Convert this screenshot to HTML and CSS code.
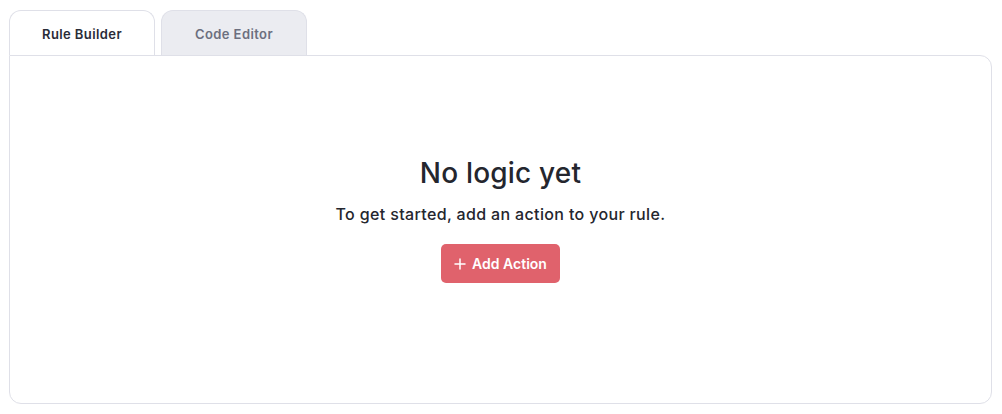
FILE: index.html
```html
<!DOCTYPE html>
<html lang="en">
<head>
    <meta charset="UTF-8">
    <meta name="viewport" content="width=device-width, initial-scale=1.0">
    <title>Rule Editor</title>
    <link rel="stylesheet" href="styles.css">
</head>
<body>

    <div class="editor">
        <div class="tabs">
            <button class="tab active">Rule Builder</button>
            <button class="tab">Code Editor</button>
        </div>

        <div class="panel">
            <div class="empty">
                <h2>No logic yet</h2>
                <p>To get started, add an action to your rule.</p>
                <button class="add-action">
                    <svg width="12" height="12" viewBox="0 0 12 12"><path d="M6 1v10M1 6h10" stroke="white" stroke-width="1.5" stroke-linecap="round"/></svg>
                    Add Action
                </button>
            </div>
        </div>
    </div>

</body>
</html>
```

FILE: styles.css
```css
* { margin: 0; padding: 0; box-sizing: border-box; }
body {
    font-family: "Inter", "Noto Sans", sans-serif;
    background: white;
    color: #24262e;
    padding: 10px 10px 10px 9px;
}
.editor {
    display: flex;
    flex-direction: column;
    height: 394px;
}
.tabs {
    display: flex;
    gap: 6px;
    position: relative;
    z-index: 1;
}
.tab {
    width: 146px;
    height: 45px;
    border: 1px solid #dfe0e8;
    border-bottom: none;
    border-radius: 12px 12px 0 0;
    background: #ebecf1;
    color: #6c6f7f;
    font-family: inherit;
    font-size: 13px;
    font-weight: 600;
    letter-spacing: 0.4px;
    cursor: pointer;
    padding-top: 2px;
}
.tab.active {
    background: white;
    color: #2a2c38;
    margin-bottom: -1px;
}
.panel {
    flex: 1;
    border: 1px solid #dfe0e8;
    border-radius: 0 12px 12px 12px;
    background: white;
    display: flex;
    justify-content: center;
}
.empty {
    display: flex;
    flex-direction: column;
    align-items: center;
    padding-top: 100px;
}
h2 {
    font-size: 28px;
    font-weight: 500;
    letter-spacing: 0.2px;
    color: #24262e;
    margin-bottom: 14px;
}
p {
    font-size: 16px;
    font-weight: 500;
    letter-spacing: 0.35px;
    color: #24262e;
    margin-bottom: 20px;
}
.add-action {
    display: flex;
    align-items: center;
    gap: 6px;
    height: 39px;
    padding: 0 13px;
    background: #e0626c;
    color: white;
    border: none;
    border-radius: 5px;
    font-family: inherit;
    font-size: 14px;
    font-weight: 600;
    cursor: pointer;
}
```
